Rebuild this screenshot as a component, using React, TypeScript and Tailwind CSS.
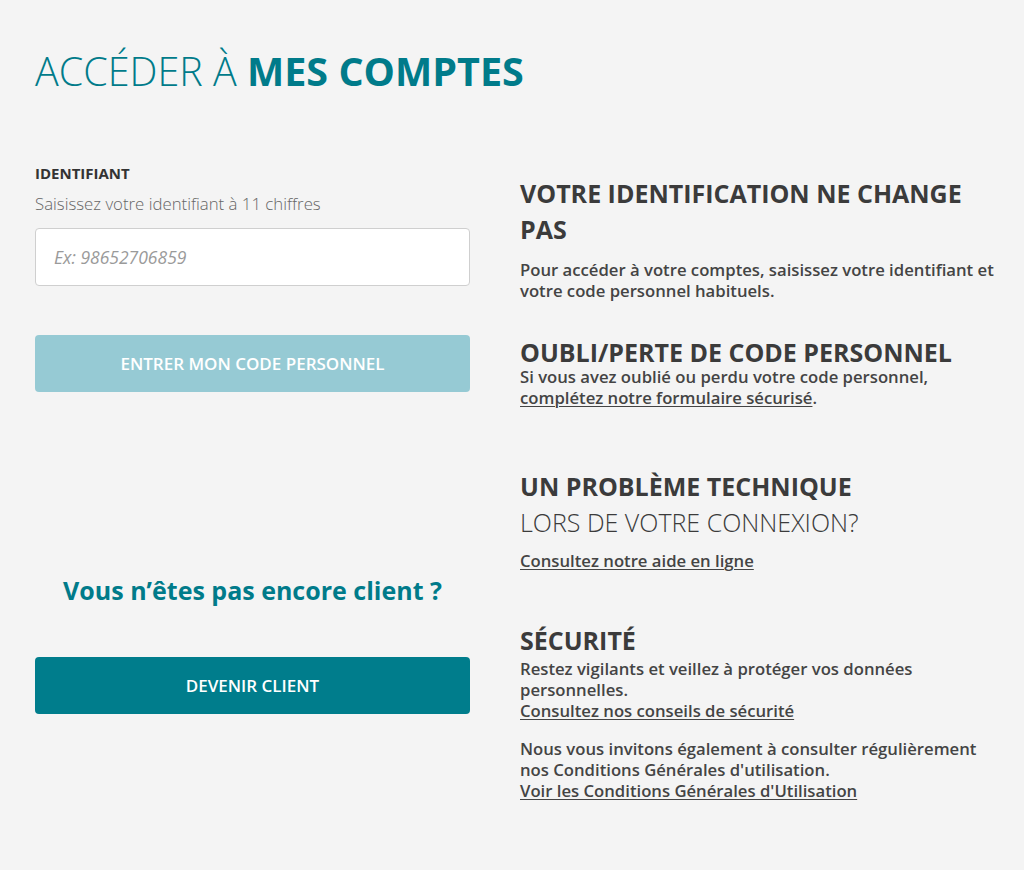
import React from "react";

const teal = "text-[#007b8a]";
const body = "text-[16.7px] leading-[21px] font-semibold text-[#444]";
const link = "underline decoration-1 underline-offset-2";

export default function App() {
  return (
    <div
      className="min-h-screen bg-[#f4f4f4] pl-[35px] pt-[47px]"
      style={{ fontFamily: '"Open Sans", "Noto Sans", sans-serif' }}
    >
      <h1 className={`text-[39.5px] leading-[48px] font-light ${teal}`}>
        ACCÉDER À <span className="font-bold">MES COMPTES</span>
      </h1>

      <div className="flex gap-[50px]">
        {/* Login column */}
        <div className="w-[435px] pt-[69px]">
          <label htmlFor="ident" className="block text-[15px] leading-[18px] font-bold text-[#333]">
            IDENTIFIANT
          </label>
          <p className="mt-[10px] text-[16.8px] leading-[24px] font-light text-[#666]">
            Saisissez votre identifiant à 11 chiffres
          </p>
          <input
            id="ident"
            type="text"
            placeholder="Ex: 98652706859"
            className="mt-[12px] block h-[58px] w-full rounded-[4px] border border-[#cfcfcf] bg-white px-[18px] text-[17.5px] outline-none placeholder:italic placeholder:text-[#9a9a9a]"
          />
          <button className="mt-[49px] flex h-[57px] w-full items-center justify-center rounded-[4px] bg-[#96cad4] text-[17px] font-semibold text-white">
            ENTRER MON CODE PERSONNEL
          </button>

          <h2 className={`mt-[182px] text-center text-[25px] leading-[32px] font-bold ${teal}`}>
            Vous n’êtes pas encore client ?
          </h2>
          <button className="mt-[51px] flex h-[57px] w-full items-center justify-center rounded-[4px] bg-[#007d8c] text-[17px] font-semibold text-white">
            DEVENIR CLIENT
          </button>
        </div>

        {/* Help column */}
        <div className="w-[480px] pt-[80px] text-[#3b3b3b]">
          <div>
            <h3 className="text-[25px] leading-[36px] font-bold">VOTRE IDENTIFICATION NE CHANGE PAS</h3>
            <p className={`mt-[12px] ${body}`}>
              Pour accéder à votre comptes, saisissez votre identifiant et votre code personnel habituels.
            </p>
          </div>

          <div className="mt-[38px]">
            <h3 className="text-[25px] leading-[26px] font-bold">OUBLI/PERTE DE CODE PERSONNEL</h3>
            <p className={`mt-[1px] ${body}`}>
              Si vous avez oublié ou perdu votre code personnel,
              <br />
              <a href="#" className={link}>
                complétez notre formulaire sécurisé
              </a>
              .
            </p>
          </div>

          <div className="mt-[60px]">
            <h3 className="text-[25px] leading-[36px] font-bold">UN PROBLÈME TECHNIQUE</h3>
            <p className="text-[25px] leading-[36px] font-light">LORS DE VOTRE CONNEXION?</p>
            <a href="#" className={`mt-[10px] block ${body} ${link}`}>
              Consultez notre aide en ligne
            </a>
          </div>

          <div className="mt-[56px]">
            <h3 className="text-[25px] leading-[26px] font-bold">SÉCURITÉ</h3>
            <p className={`mt-[5px] ${body}`}>
              Restez vigilants et veillez à protéger vos données personnelles.
              <br />
              <a href="#" className={link}>
                Consultez nos conseils de sécurité
              </a>
            </p>
            <p className={`mt-[17px] ${body}`}>
              Nous vous invitons également à consulter régulièrement nos Conditions Générales d'utilisation.
              <br />
              <a href="#" className={link}>
                Voir les Conditions Générales d'Utilisation
              </a>
            </p>
          </div>
        </div>
      </div>
    </div>
  );
}
